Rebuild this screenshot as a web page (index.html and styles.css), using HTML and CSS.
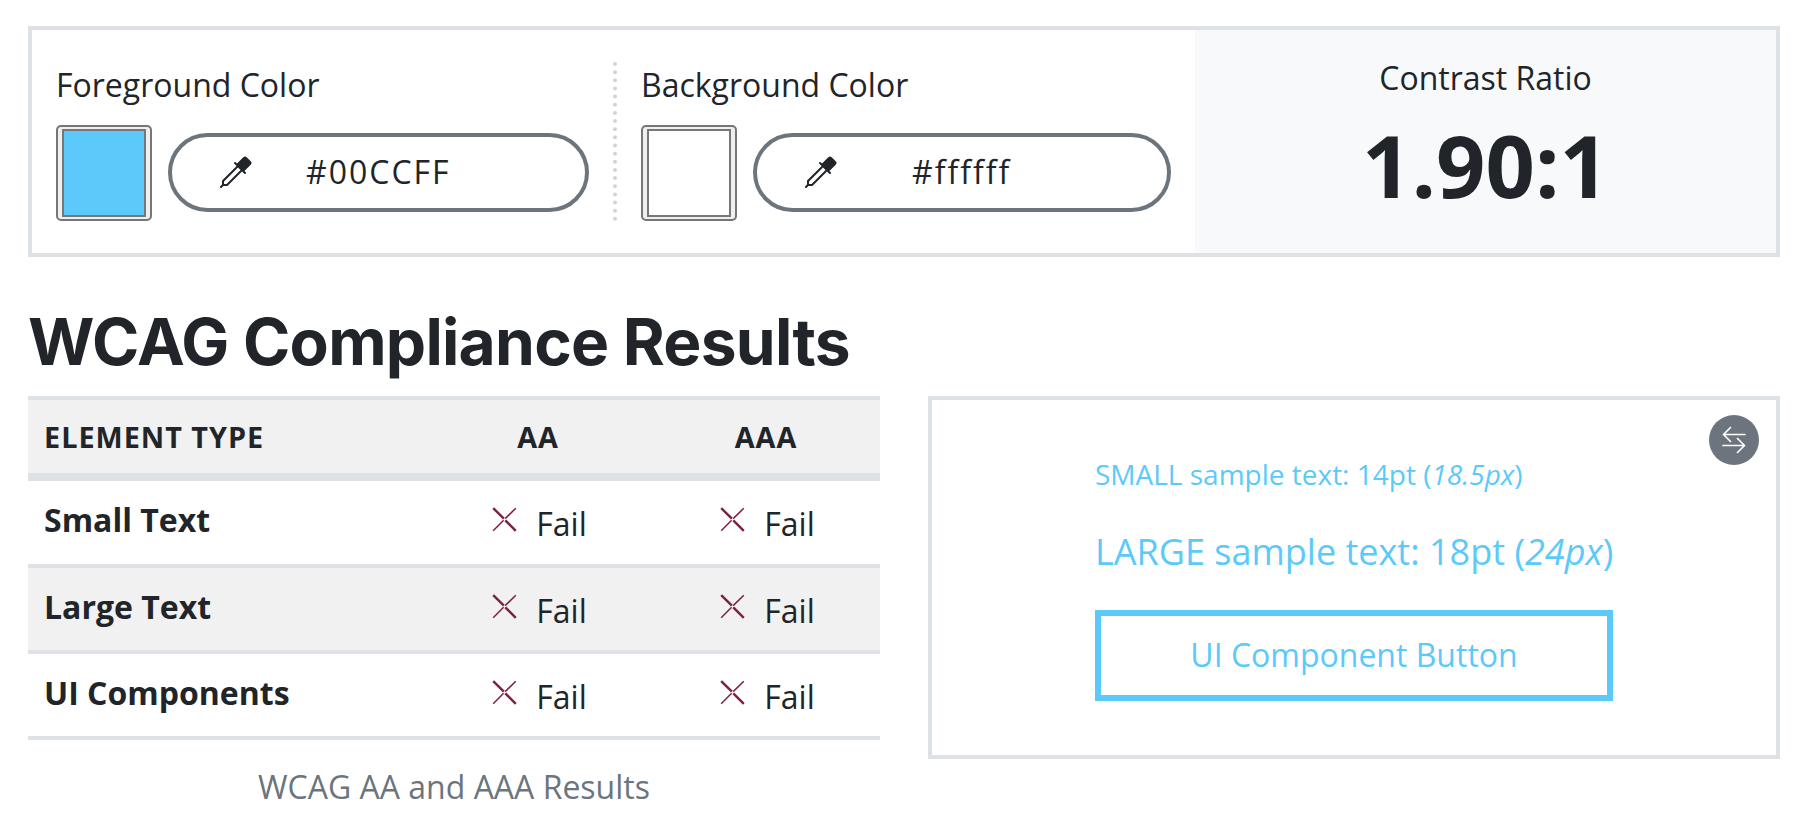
FILE: index.html
```html
<!DOCTYPE html>
<html lang="en">
<head>
<meta charset="utf-8">
<title>Contrast Checker</title>
<link rel="stylesheet" href="styles.css">
</head>
<body>
<svg class="defs" width="0" height="0" aria-hidden="true">
  <symbol id="dropper" viewBox="0 0 16 16">
    <path d="M13.354.646a1.207 1.207 0 0 0-1.708 0L8.5 3.793l-.646-.647a.5.5 0 1 0-.708.708L8.293 5l-7.147 7.146A.5.5 0 0 0 1 12.5v1.793l-.854.853a.5.5 0 1 0 .708.707L1.707 15H3.5a.5.5 0 0 0 .354-.146L11 7.707l1.146 1.147a.5.5 0 0 0 .708-.708l-.647-.646 3.147-3.146a1.207 1.207 0 0 0 0-1.708zM2 12.707l7-7L10.293 7l-7 7H2z"/>
  </symbol>
  <symbol id="cross" viewBox="0 0 25 25">
    <path d="M1.2 1.2 L11.9 11.7 M13.3 13.3 L23.8 23.8" stroke-width="2.5"/>
    <path d="M23.8 1.2 L13.2 11.6 M11.6 13.2 L1.2 23.8" stroke-width="1.5"/>
  </symbol>
</svg>
<main class="page">
  <section class="checker">
    <div class="field">
      <div class="label">Foreground Color</div>
      <div class="controls">
        <div class="swatch"><div class="chip chip-fg"></div></div>
        <div class="hex hex-fg"><svg class="dropper"><use href="#dropper"/></svg><span class="value">#00CCFF</span></div>
      </div>
    </div>
    <svg class="divider" viewBox="0 0 4 160"><line x1="2" y1="2" x2="2" y2="158"/></svg>
    <div class="field field-bg">
      <div class="label">Background Color</div>
      <div class="controls">
        <div class="swatch"><div class="chip"></div></div>
        <div class="hex hex-bg"><svg class="dropper"><use href="#dropper"/></svg><span class="value">#ffffff</span></div>
      </div>
    </div>
    <div class="ratio">
      <div class="ratio-label">Contrast Ratio</div>
      <div class="ratio-value">1.90:1</div>
    </div>
  </section>
  <h2 class="title">WCAG Compliance Results</h2>
  <div class="results">
    <table class="table">
      <caption>WCAG AA and AAA Results</caption>
      <thead><tr><th class="first">Element Type</th><th>AA</th><th>AAA</th></tr></thead>
      <tbody>
        <tr><th class="first">Small Text</th><td><div class="status"><svg class="cross"><use href="#cross"/></svg><span>Fail</span></div></td><td><div class="status"><svg class="cross"><use href="#cross"/></svg><span>Fail</span></div></td></tr>
        <tr class="striped"><th class="first">Large Text</th><td><div class="status"><svg class="cross"><use href="#cross"/></svg><span>Fail</span></div></td><td><div class="status"><svg class="cross"><use href="#cross"/></svg><span>Fail</span></div></td></tr>
        <tr><th class="first">UI Components</th><td><div class="status"><svg class="cross"><use href="#cross"/></svg><span>Fail</span></div></td><td><div class="status"><svg class="cross"><use href="#cross"/></svg><span>Fail</span></div></td></tr>
      </tbody>
    </table>
    <div class="preview">
      <div class="swap"><svg class="arrows" viewBox="0 0 24 28"><path d="M1.5 8.5H23M8.5 1.5l-7 7 7 7M1 19.5H22.5M15.5 12.5l7 7-7 7"/></svg></div>
      <div class="samples">
        <p class="small">SMALL sample text: 14pt (<em>18.5px</em>)</p>
        <p class="large">LARGE sample text: 18pt (<em>24px</em>)</p>
        <div class="button">UI Component Button</div>
      </div>
    </div>
  </div>
</main>
</body>
</html>
```

FILE: styles.css
```css
* { box-sizing: border-box; }
body { margin: 0; background: #fff; color: #212529; font: 32px/48px "Open Sans", "Noto Sans", sans-serif; overflow: hidden; }
.defs { position: absolute; }
.page { padding: 26px 16px 0 28px; }
.checker { display: flex; height: 231px; border: 4px solid #dee2e6; }
.field { width: 581px; padding: 31px 0 0 24px; }
.field-bg { width: 578px; }
.label { height: 48px; white-space: nowrap; }
.controls { display: flex; align-items: flex-start; gap: 16px; margin-top: 16px; }
.swatch { width: 96px; height: 96px; padding: 2px 4px; border: 2px solid #767676; border-radius: 5px; background: #efefef; }
.chip { height: 100%; border: 2px solid #777; background: #fff; }
.chip-fg { background: #5bcafb; }
.hex { display: flex; align-items: center; height: 79px; margin-top: 8px; border: 4px solid #6c757d; border-radius: 40px; padding: 0 0 1px 48px; }
.hex-fg { width: 421px; }
.hex-bg { width: 418px; }
.dropper { width: 32px; height: 32px; fill: #212529; flex: none; }
.value { margin-left: 54px; letter-spacing: 2px; }
.hex-bg .value { margin-left: 75px; }
.divider { width: 4px; height: 160px; margin-top: 32px; }
.divider line { stroke: #ced4da; stroke-width: 4; stroke-linecap: round; stroke-dasharray: 0 8.15; }
.ratio { flex: 1; background: #f8f9fb; text-align: center; padding-top: 24px; }
.ratio-value { font-size: 86.4px; font-weight: 700; line-height: 120px; margin-top: 3px; }
.title { margin: 46px 0 0; font: 700 64px/77px Inter, sans-serif; letter-spacing: -0.74px; white-space: nowrap; }
.results { display: flex; gap: 48px; align-items: flex-start; margin-top: 16px; }
.table { width: 852px; table-layout: fixed; border-spacing: 0; border-top: 4px solid #dee2e6; }
caption { caption-side: bottom; color: #6c757d; padding-top: 22px; line-height: 50px; }
th, td { padding: 0; height: 86px; border-bottom: 4px solid #dee2e6; vertical-align: top; }
thead th { height: 81px; border-bottom-width: 8px; background: #f1f1f1; font-size: 28.8px; line-height: 73px; text-transform: uppercase; letter-spacing: 1px; }
.first { width: 396px; padding-left: 16px; text-align: left; }
tbody th { line-height: 78px; }
tbody tr:first-child > * { height: 87px; }
.striped > * { background: #f1f1f1; }
.status { display: flex; justify-content: center; align-items: flex-start; gap: 19px; height: 82px; padding-left: 3px; line-height: 72px; }
.status span { padding-top: 7px; }
.cross { width: 25px; height: 25px; margin-top: 26px; stroke: #7d2142; fill: none; }
.preview { position: relative; width: 852px; height: 363px; border: 4px solid #dee2e6; padding-left: 163px; }
.swap { position: absolute; top: 15px; right: 17px; display: flex; align-items: center; justify-content: center; width: 50px; height: 50px; border-radius: 50%; background: #6c757d; }
.arrows { width: 24px; height: 28px; margin-right: 1px; fill: none; stroke: #fff; stroke-width: 1.7; stroke-linecap: round; stroke-linejoin: round; }
.samples { width: 518px; color: #5bcafb; white-space: nowrap; }
.small { margin: 53px 0 0; font-size: 28px; line-height: 42px; }
.large { margin: 30px 0 0; font-size: 36px; line-height: 54px; }
.button { margin-top: 31px; height: 91px; border: 6px solid #5bcafb; text-align: center; line-height: 77px; }
```
